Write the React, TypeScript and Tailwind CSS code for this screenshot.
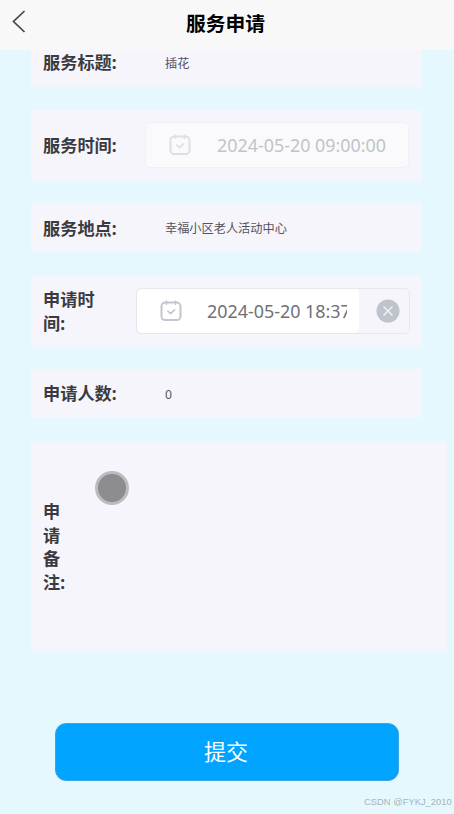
import type { ReactNode } from "react";

function CalendarIcon({ className = "" }: { className?: string }) {
  return (
    <svg className={"shrink-0 " + className} width="22" height="22" viewBox="0 0 22 22" fill="none" stroke="currentColor" strokeLinecap="round" strokeLinejoin="round">
      <rect x="1.5" y="2.6" width="19" height="17.5" rx="3.8" strokeWidth="2" />
      <path d="M6.5 1v3.4M15.5 1v3.4" strokeWidth="1.4" />
      <path d="M7.8 11l2.8 2.6 4-3.8" strokeWidth="1.6" />
    </svg>
  );
}

function Card({ className, children }: { className: string; children: ReactNode }) {
  return <section className={"flex shrink-0 items-center bg-[#f6f5fb] pl-3 " + className}>{children}</section>;
}

function Label({ className = "w-[122px]", children }: { className?: string; children: ReactNode }) {
  return (
    <div className={"shrink-0 text-[17.2px] leading-[23.5px] font-bold text-[#3a3b40] " + className}>{children}</div>
  );
}

function Value({ children }: { children: ReactNode }) {
  return <span className="pt-0.5 text-[12.2px] leading-4 text-[#55535c]">{children}</span>;
}

export default function App() {
  return (
    <div className="relative flex h-[814px] w-[454px] flex-col overflow-hidden bg-[#e5f8fe] font-['Noto_Sans','Noto_Sans_CJK_SC',sans-serif]">
      <header className="z-10 grid h-[50px] shrink-0 grid-cols-[60px_1fr_60px] items-center bg-[#f8f8f8]">
        <svg className="ml-3 mb-2" width="14" height="24" viewBox="0 0 14 24" fill="none" stroke="#444" strokeWidth="1.7">
          <path d="M12.5 2L1.5 12.5L12.5 23" />
        </svg>
        <h1 className="pr-[3px] pb-0.5 text-center text-[19.8px] leading-6 font-bold text-black">服务申请</h1>
      </header>

      <main className="-mt-3 flex flex-col items-start pl-[31px]">
        <Card className="h-[49px] w-[391px]">
          <Label>服务标题:</Label>
          <Value>插花</Value>
        </Card>

        <Card className="mt-[23px] h-[71px] w-[391px]">
          <Label className="w-[102px]">服务时间:</Label>
          <div className="mb-0.5 flex h-[46px] w-[264px] items-center rounded-[5px] border border-[#f0eff4] bg-[#fafafc] pl-[23px] text-[#dedee3]">
            <CalendarIcon />
            <span className="ml-[26px] text-[17.9px] leading-6 whitespace-nowrap text-[#c2c3c8]">2024-05-20 09:00:00</span>
          </div>
        </Card>

        <Card className="mt-[22px] h-[49px] w-[391px]">
          <Label className="w-[122px] pt-0.5">服务地点:</Label>
          <Value>幸福小区老人活动中心</Value>
        </Card>

        <Card className="mt-6 h-[71px] w-[391px]">
          <Label className="w-[93px] pr-8">申请时间:</Label>
          <div className="mb-0.5 flex h-[46px] w-[274px] items-center rounded-[5px] border border-[#e8e7ed]">
            <div className="flex h-11 w-[222px] items-center rounded-[5px] bg-white pl-[23px] text-[#c3c6cd]">
              <CalendarIcon />
              <span className="ml-[25px] w-[140px] overflow-hidden text-[17.9px] leading-6 whitespace-nowrap text-[#707176]">2024-05-20 18:37:00</span>
            </div>
            <svg className="ml-[17px]" width="24" height="24" viewBox="0 0 24 24">
              <circle cx="12" cy="12" r="11.5" fill="#bfc4cc" />
              <path d="M7.5 7.5l9 9M16.5 7.5l-9 9" stroke="#f6f5fb" strokeWidth="1.3" />
            </svg>
          </div>
        </Card>

        <Card className="mt-[22px] h-[49px] w-[391px]">
          <Label>申请人数:</Label>
          <Value>0</Value>
        </Card>

        <Card className="mt-[23px] h-[210px] w-[416px]">
          <Label className="w-[26px] pt-0.5">申<br />请<br />备<br />注:</Label>
        </Card>

        <button className="mt-[72px] ml-6 h-[58px] w-[344px] rounded-[11px] border border-[#38a5e5] bg-[#00a4ff] pr-0.5 pb-0.5 text-[22px] leading-7 text-white">
          提交
        </button>
      </main>

      <div className="absolute top-[471px] left-[95px] size-[34px] rounded-full border-[3px] border-[#bcbcbe] bg-[#8d8d90]" />
      <div className="absolute top-[795px] left-[364px] font-['Liberation_Sans',sans-serif] text-[9.4px] leading-[14px] whitespace-nowrap text-[#a9b3b7]">
        CSDN @FYKJ_2010
      </div>
    </div>
  );
}
